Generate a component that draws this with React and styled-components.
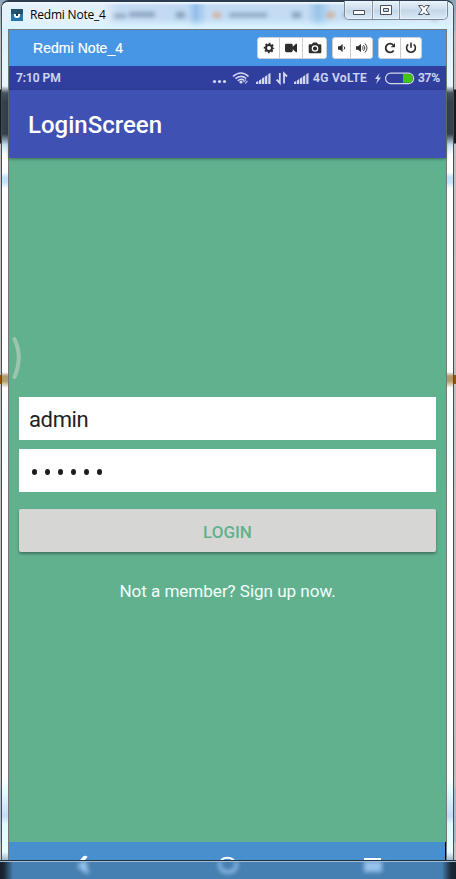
import React from 'react';
import styled, { createGlobalStyle } from 'styled-components';

const GlobalStyle = createGlobalStyle`
  * { box-sizing: border-box; }
  html, body { margin: 0; overflow: hidden; }
  body { font-family: Roboto, "Liberation Sans", sans-serif; }
`;

const Desktop = styled.div`
  width: 456px;
  height: 879px;
  display: flex;
  flex-direction: column;
  overflow: hidden;
  background: linear-gradient(#8fa4b8 0, #a9b8c6 30px, #bcbcbc 32px, #bcbcbc 89px, #15181c 90px, #15181c 143px, #bebebe 144px, #c0c0c0 375px, #8d5706 375px, #8d5706 384px, #c0c0c0 384px, #bdbdbd 788px, #a5b7c8 790px, #a5b7c8 842px, #c2c2c2 843px);
`;

const Window = styled.div`
  width: 453px;
  height: 860px;
  flex: none;
  margin-left: 1px;
  padding: 0 6px;
  display: flex;
  flex-direction: column;
  border: 1px solid #494c4f;
  border-top: 2px solid #2c3c4e;
  border-bottom: 0;
  border-radius: 8px 8px 0 0;
  background: linear-gradient(#d5e5f7 0, #d7f0ff 27px, #e7f6ff 70px, #e9f5fc 84px, #46535f 91px, #34414d 100px, #34414d 132px, #c5e2f6 143px, #fff 153px, #fff 170px, #c4e3ff 175px, #c4e3ff 180px, #fff 187px, #fff 370px, #b49a6c 374px, #b49a6c 379px, #fff 386px, #f5feff 430px, #fff 490px, #fff 775px, #e2fcff 790px, #c5dcfa 814px, #dffdff 822px, #e8fdff 850px, #a9bdd6 857px);
`;

const TitleBar = styled.header`
  position: relative;
  height: 27px;
  flex: none;
  display: flex;
  align-items: center;
  margin: 0 -6px;
  padding-left: 9px;
  border-radius: 6px 6px 0 0;
  background: linear-gradient(90deg, #e3f1fc 0, #e3f0fb 100px, #c7dcf3 116px, #c0d9f3 185px, #94bfeb 194px, #c3dcf5 205px, #c3dbf3 305px, #9bc4ea 316px, #c6def4 330px, #d9ebf9 100%);
  box-shadow: inset 0 2px 2px #eef7ff, inset 0 -8px 6px -2px #daf4ff;
`;

const AppMark = styled.svg`
  width: 12px;
  height: 12px;
  flex: none;
  margin-top: -2px;
  z-index: 1;
`;

const WindowTitle = styled.span`
  margin: -2px 0 0 7px;
  z-index: 1;
  color: #000;
  font: 12px/20px "Open Sans", "Noto Sans", sans-serif;
  letter-spacing: -0.2px;
  text-shadow: 0 0 6px #fff;
`;

const GlassReflection = styled.svg`
  position: absolute;
  inset: 0;
  width: 451px;
  height: 27px;
`;

const Captions = styled.div`
  position: absolute;
  top: -1px;
  right: 5px;
  height: 19px;
  display: flex;
  border: 1px solid #7b8999;
  border-top: 0;
  border-radius: 0 0 5px 5px;
  overflow: hidden;
  background: linear-gradient(#e8f2fb, #cddceb 48%, #c3d6e8 52%, #d9ebf8);
`;

const Caption = styled.div`
  width: ${({ $width }) => $width}px;
  display: grid;
  place-items: center;
  border-right: 1px solid #8996a4;
  box-shadow: inset 0 0 0 1px #f0f7fe99;
  &:last-child { border-right: 0; }
  svg { display: block; }
`;

const Client = styled.main`
  flex: 1;
  min-height: 0;
  display: flex;
  flex-direction: column;
  border: 1px solid #75777a;
  border-bottom: 0;
  background: #61b18f;
`;

const ToolBar = styled.div`
  height: 36px;
  flex: none;
  display: flex;
  align-items: center;
  padding: 0 24px;
  background: #4796e6;
`;

const DeviceName = styled.span`
  flex: 1;
  color: #fff;
  font: 14px/20px "Liberation Sans", sans-serif;
  letter-spacing: 0.05px;
  -webkit-text-stroke: 0.2px #fff;
`;

const ButtonGroup = styled.div`
  height: 22px;
  display: flex;
  margin-left: ${({ $gap = 0 }) => $gap}px;
  border: 1px solid #ccd0d5;
  border-radius: 3px;
  background: #fff;
`;

const ToolButton = styled.button`
  width: ${({ $width }) => $width}px;
  display: grid;
  place-items: center;
  padding: 0;
  border: 0;
  border-right: 1px solid #ccc;
  background: none;
  color: #2e2e2e;
  &:last-child { border-right: 0; }
  svg { display: block; }
`;

const StatusBar = styled.div`
  height: 24px;
  flex: none;
  display: flex;
  align-items: center;
  padding: 0 7px;
  background: #303f9e;
  color: #d3d8f2;
  font: 500 12px/24px Roboto, sans-serif;
  -webkit-text-stroke: 0.2px #d3d8f2;
`;

const Clock = styled.span`
  flex: 1;
`;

const StatusIcons = styled.svg`
  width: 98px;
  height: 24px;
  margin-right: 3px;
`;

const Network = styled.span`
  width: 61px;
  white-space: nowrap;
  letter-spacing: 0.35px;
`;

const Battery = styled.svg`
  width: 41px;
  height: 24px;
  margin-right: 3px;
`;

const Charge = styled.span`
  width: 21px;
  letter-spacing: -0.2px;
  white-space: nowrap;
`;

const AppBar = styled.div`
  height: 68px;
  flex: none;
  padding: 2px 0 0 19px;
  z-index: 1;
  background: #3f51b3;
  color: #fff;
  box-shadow: 0 1px 3px #0006;
  font: 500 24px/66px Roboto, sans-serif;
`;

const Screen = styled.div`
  height: 684px;
  flex: none;
  display: flex;
  flex-direction: column;
  padding: 178px 10px 0;
`;

const EdgeHandle = styled.svg`
  width: 12px;
  height: 44px;
  flex: none;
  margin-left: -7px;
`;

const Field = styled.div`
  height: 43px;
  flex: none;
  display: flex;
  align-items: center;
  margin-top: ${({ $gap }) => $gap}px;
  padding: 2px 10px 0;
  background: #fff;
  color: #222;
  font: 22px/40px Roboto, sans-serif;
  letter-spacing: -0.35px;
`;

const Dots = styled.div`
  display: flex;
  gap: 8px;
  padding-left: 3px;
`;

const Dot = styled.i`
  width: 5px;
  height: 6px;
  border-radius: 50%;
  background: #1c1c1c;
`;

const LoginButton = styled.button`
  height: 43px;
  flex: none;
  margin: 17px 0 0;
  padding: 2px 0 0;
  border: 0;
  border-radius: 2px;
  background: #d6d7d5;
  color: #61b18f;
  box-shadow: 0 2px 3px #0005;
  font: 500 17px/40px Roboto, sans-serif;
`;

const SignUp = styled.p`
  margin: 28px 0 0;
  color: #f4fffa;
  text-align: center;
  font: 17.1px/22px Roboto, sans-serif;
  letter-spacing: -0.05px;
`;

const NavigationBar = styled.div`
  height: 18px;
  flex: none;
  border-right: 1px solid #000;
  background: #488fce;
  svg { display: block; }
`;

const TaskBar = styled.footer`
  height: 19px;
  flex: none;
  border-top: 1px solid #20303e;
  box-shadow: inset 0 1px #a5bed4;
  background: linear-gradient(90deg, #17202b 0, #1b2937 4px, #467fb1 13px, #467fb1 442px, #1b2937 451px, #17202b);
  svg { display: block; }
`;

const stroke = { fill: 'none', stroke: 'currentColor', strokeWidth: 1.7 };

function Tool({ icon }) {
  return (
    <svg width="14" height="14" viewBox="0 0 14 14" fill="currentColor">
      {icon === 'gear' && <g><circle cx="7" cy="7" r="3" {...stroke} strokeWidth="2" /><circle cx="7" cy="7" r="4.5" {...stroke} strokeWidth="1.5" strokeDasharray="1.9 1.634" strokeDashoffset=".95" /></g>}
      {icon === 'video' && <path d="M1 4.2Q1 2.8 2.4 2.8H7.3Q8.7 2.8 8.7 4.2V5.7L12 2.8H13V11.2H12L8.7 8.3V9.8Q8.7 11.2 7.3 11.2H2.4Q1 11.2 1 9.8Z" />}
      {icon === 'camera' && <path fillRule="evenodd" d="M1.8 3.2H4L5 1.6H9L10 3.2H12.2Q13.3 3.2 13.3 4.3V11Q13.3 12.2 12.2 12.2H1.8Q.7 12.2.7 11V4.3Q.7 3.2 1.8 3.2M7 4.2A3.3 3.3 0 1 0 7 10.8A3.3 3.3 0 1 0 7 4.2M7 5.4A2.1 2.1 0 1 1 7 9.6A2.1 2.1 0 1 1 7 5.4" />}
      {icon === 'low' && <g><path d="M3 5.3H5L7.6 3V11L5 8.7H3Z" /><path d="M9 5.6Q10.8 7 9 8.4" {...stroke} strokeWidth="1" /></g>}
      {icon === 'high' && <g><path d="M1 5.3H3L6 3V11L3 8.7H1Z" /><path d="M7.3 5.5Q9 7 7.3 8.5M8.5 4Q11.4 7 8.5 10M10 2.5Q14 7 10 11.5" {...stroke} strokeWidth=".9" /></g>}
      {icon === 'refresh' && <g><path d="M10.7 9.6A4.4 4.4 0 1 1 10.2 3.9" {...stroke} strokeWidth="1.8" /><path d="M12 1.9V6.2H7.7Z" /></g>}
      {icon === 'power' && <g><path d="M4.3 3.4A4.4 4.4 0 1 0 9.7 3.4" {...stroke} strokeWidth="1.6" /><path d="M7 1.4V6.8" {...stroke} strokeWidth="1.6" /></g>}
    </svg>
  );
}

function Signal({ x }) {
  return <g transform={`translate(${x} 7)`} fill="#d3d8f2">
    <path d="M0 11V9L2.3 8V11ZM3 11V7.5L5.3 6V11ZM6 11V5.5L8.3 4V11ZM9 11V3.5L11.3 2V11ZM12.3 11V1L14.5 0V11Z" />
  </g>;
}

export default function App() {
  return (
    <Desktop>
      <GlobalStyle />
      <Window>
        <TitleBar>
          <GlassReflection viewBox="0 0 451 27">
            <defs><filter id="soft" x="-20%" y="-100%" width="140%" height="300%"><feGaussianBlur stdDeviation="2" /></filter></defs>
            <g filter="url(#soft)" fill="#4f6b8a" opacity=".5">
              <path d="M112 12h12v4h-12zM127 10h26v5h-26zM174 10h9v6h-9zM227 11h38v4h-38zM290 10h9v6h-9zM341 11h30v4h-30zM408 11h10v4h-10z" />
              <path d="M211 10h8v6h-8zM325 10h8v6h-8z" fill="#e08a50" />
              <path d="M434 18A6 6 0 1 1 442 10" fill="none" stroke="#344c67" strokeWidth="3" />
            </g>
          </GlassReflection>
          <AppMark viewBox="0 0 12 12">
            <path fill="#2774a9" d="M0 0h12v12H0z" /><path fill="#24536f" d="M0 0h12v5H0z" />
            <path fill="#fff" d="M3 5h6v1.5Q9 9 6 9T3 6.5Z" /><path fill="#20394b" d="M5 4.5h2V7H5z" />
          </AppMark>
          <WindowTitle>Redmi Note_4</WindowTitle>
          <Captions>
            <Caption $width={28}><svg width="14" height="14"><path d="M1.5 7.5h11v4h-11z" fill="#fff" stroke="#47505d" /></svg></Caption>
            <Caption $width={27}><svg width="14" height="14"><path d="M1.5 2.5h11v9h-11zM4.5 5.5h5v3h-5z" fill="#fff" fillRule="evenodd" stroke="#47505d" /></svg></Caption>
            <Caption $width={47}><svg width="14" height="14"><path d="M1.5 2.5h4L7 4.3 8.5 2.5h4L9 7l3.5 4.5h-4L7 9.7l-1.5 1.8h-4L5 7Z" fill="#fff" stroke="#47505d" /></svg></Caption>
          </Captions>
        </TitleBar>
        <Client>
          <ToolBar>
            <DeviceName>Redmi Note_4</DeviceName>
            <ButtonGroup>
              <ToolButton $width={22}><Tool icon="gear" /></ToolButton>
              <ToolButton $width={23}><Tool icon="video" /></ToolButton>
              <ToolButton $width={23}><Tool icon="camera" /></ToolButton>
            </ButtonGroup>
            <ButtonGroup $gap={5}>
              <ToolButton $width={18}><Tool icon="low" /></ToolButton>
              <ToolButton $width={21}><Tool icon="high" /></ToolButton>
            </ButtonGroup>
            <ButtonGroup $gap={5}>
              <ToolButton $width={22}><Tool icon="refresh" /></ToolButton>
              <ToolButton $width={20}><Tool icon="power" /></ToolButton>
            </ButtonGroup>
          </ToolBar>
          <StatusBar>
            <Clock>7:10 PM</Clock>
            <StatusIcons viewBox="0 0 98 24">
              <g fill="#d3d8f2"><circle cx="2.5" cy="15.5" r="1.6" /><circle cx="7.5" cy="15.5" r="1.6" /><circle cx="12.5" cy="15.5" r="1.6" /><circle cx="29" cy="16" r="1.6" /></g>
              <g fill="none" stroke="#d3d8f2" strokeWidth="1.6"><path d="M21 10.5Q29 3.5 36.5 10.5M23.4 12.7Q29 8 34.2 12.5M25.8 14.8Q29 12 32 14.4" /><path d="M31.5 16L34 13.5M33 17.5L35.5 15" strokeWidth="1.4" opacity=".7" /></g>
              <Signal x={44} />
              <path d="M67.8 7V17L64.6 13.7M72 17.5V7.5L75 10.5" fill="none" stroke="#d3d8f2" strokeWidth="1.8" />
              <Signal x={82} />
            </StatusIcons>
            <Network>4G VoLTE</Network>
            <Battery viewBox="0 0 41 24">
              <path fill="#d3d8f2" d="M5.5 7L1 13h2.7L2 18l5-6.5H4.2Z" />
              <rect x="11.6" y="7.1" width="28" height="10.5" rx="5.2" fill="none" stroke="#d3d8f2" strokeWidth="1.2" />
              <path d="M29 8h6Q38.7 8 38.7 12.4T35 16.8h-6Z" fill="#42c70e" />
            </Battery>
            <Charge>37%</Charge>
          </StatusBar>
          <AppBar>LoginScreen</AppBar>
          <Screen>
            <EdgeHandle viewBox="0 0 12 44"><path d="M2.5 3Q11 21 2.5 41" fill="none" stroke="#9dc5ae" strokeWidth="4" strokeLinecap="round" /></EdgeHandle>
            <Field $gap={17}>admin</Field>
            <Field $gap={9}><Dots>{[0, 1, 2, 3, 4, 5].map((n) => <Dot key={n} />)}</Dots></Field>
            <LoginButton>LOGIN</LoginButton>
            <SignUp>Not a member? Sign up now.</SignUp>
          </Screen>
          <NavigationBar>
            <svg width="436" height="18"><path d="M71 18Q73 16 74 14.5Q77 13 78.5 15L76 18Z" fill="#fff" /><path d="M212 18Q218 13.5 225 18" stroke="#fff" strokeWidth="2" fill="none" /><path d="M355 16h17v2h-17z" fill="#fff" /></svg>
          </NavigationBar>
        </Client>
      </Window>
      <TaskBar>
        <svg width="456" height="18"><defs><filter id="haze" x="-50%" y="-50%" width="200%" height="200%"><feGaussianBlur stdDeviation="2" /></filter></defs>
          <g filter="url(#haze)" fill="#96c2eb"><path d="M77 5L82 0H87V5L89 13Q83 12 77 5Z" /><path d="M220 0Q218 11 228 11T236 0" fill="none" stroke="#96c2eb" strokeWidth="3" /><path d="M364 0h18v11h-18z" /></g>
        </svg>
      </TaskBar>
    </Desktop>
  );
}
